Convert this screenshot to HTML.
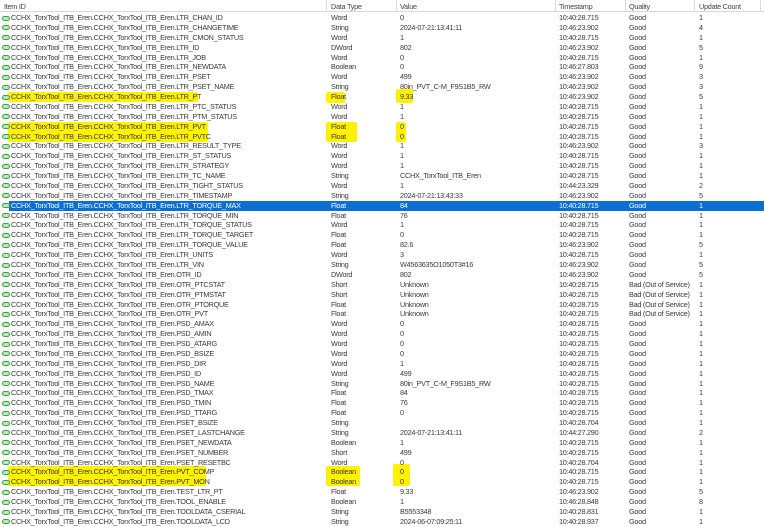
<!DOCTYPE html>
<html><head><meta charset="utf-8"><style>
*{margin:0;padding:0;box-sizing:border-box}
body{width:764px;height:527px;overflow:hidden;background:#fff;font-family:"Liberation Sans",sans-serif;font-size:7.3px;letter-spacing:-0.27px;color:#3a3a3a;position:relative}
.hdr{position:absolute;left:0;top:0;width:764px;height:12px;border-bottom:1px solid #d8d8d8;background:#fff}
.hdr span{position:absolute;top:2px;color:#444}
.hdr i{position:absolute;top:0;width:1px;height:12px;background:#dcdcdc}
.r{position:absolute;left:0;width:764px;height:9.88px;line-height:9.88px;white-space:nowrap}
.r span{position:absolute;top:0}
.r .ic{position:absolute;left:2px;top:2.5px;width:8px;height:5px;border:1.3px solid #3aa53a;border-radius:2.5px;background:#bfe6bf}
.c1{left:11px}.c2{left:331px}.c3{left:400px}.c4{left:559px}.c5{left:629px}.c6{left:699px}
.sel{position:absolute;left:9px;width:755px;height:9.88px;background:#0a6fd1}
.sel2 span{color:#fff}
.hl{position:absolute;background:#fff200;border-radius:2px}
</style></head><body>
<div class="hdr">
<span style="left:4px">Item ID</span><i style="left:326px"></i>
<span style="left:331px">Data Type</span><i style="left:396px"></i>
<span style="left:400px">Value</span><i style="left:555px"></i>
<span style="left:559px">Timestamp</span><i style="left:625px"></i>
<span style="left:629px">Quality</span><i style="left:694px"></i>
<span style="left:699px">Update Count</span><i style="left:760px"></i>
</div>
<div class="hl" style="left:8px;top:92px;width:190px;height:10px"></div>
<div class="hl" style="left:326px;top:92px;width:19px;height:11px"></div>
<div class="hl" style="left:396px;top:89px;width:17px;height:14px"></div>
<div class="hl" style="left:8px;top:122px;width:200px;height:20px"></div>
<div class="hl" style="left:326px;top:122px;width:31px;height:20px"></div>
<div class="hl" style="left:396px;top:122px;width:10px;height:20px"></div>
<div class="hl" style="left:8px;top:466px;width:198px;height:20px"></div>
<div class="hl" style="left:326px;top:466px;width:34px;height:20px"></div>
<div class="hl" style="left:393px;top:464px;width:17px;height:22px"></div>
<div class="sel" style="top:200.7px"></div>
<div class="r" style="top:13px"><b class="ic"></b><span class="c1">CCHX_TorxTool_ITB_Eren.CCHX_TorxTool_ITB_Eren.LTR_CHAN_ID</span><span class="c2">Word</span><span class="c3">0</span><span class="c4">10:40:28.715</span><span class="c5">Good</span><span class="c6">1</span></div>
<div class="r" style="top:22.88px"><b class="ic"></b><span class="c1">CCHX_TorxTool_ITB_Eren.CCHX_TorxTool_ITB_Eren.LTR_CHANGETIME</span><span class="c2">String</span><span class="c3">2024-07-21:13:41:11</span><span class="c4">10:46:23.902</span><span class="c5">Good</span><span class="c6">4</span></div>
<div class="r" style="top:32.76px"><b class="ic"></b><span class="c1">CCHX_TorxTool_ITB_Eren.CCHX_TorxTool_ITB_Eren.LTR_CMON_STATUS</span><span class="c2">Word</span><span class="c3">1</span><span class="c4">10:40:28.715</span><span class="c5">Good</span><span class="c6">1</span></div>
<div class="r" style="top:42.64px"><b class="ic"></b><span class="c1">CCHX_TorxTool_ITB_Eren.CCHX_TorxTool_ITB_Eren.LTR_ID</span><span class="c2">DWord</span><span class="c3">802</span><span class="c4">10:46:23.902</span><span class="c5">Good</span><span class="c6">5</span></div>
<div class="r" style="top:52.52px"><b class="ic"></b><span class="c1">CCHX_TorxTool_ITB_Eren.CCHX_TorxTool_ITB_Eren.LTR_JOB</span><span class="c2">Word</span><span class="c3">0</span><span class="c4">10:40:28.715</span><span class="c5">Good</span><span class="c6">1</span></div>
<div class="r" style="top:62.4px"><b class="ic"></b><span class="c1">CCHX_TorxTool_ITB_Eren.CCHX_TorxTool_ITB_Eren.LTR_NEWDATA</span><span class="c2">Boolean</span><span class="c3">0</span><span class="c4">10:46:27.803</span><span class="c5">Good</span><span class="c6">9</span></div>
<div class="r" style="top:72.28px"><b class="ic"></b><span class="c1">CCHX_TorxTool_ITB_Eren.CCHX_TorxTool_ITB_Eren.LTR_PSET</span><span class="c2">Word</span><span class="c3">499</span><span class="c4">10:46:23.902</span><span class="c5">Good</span><span class="c6">3</span></div>
<div class="r" style="top:82.16px"><b class="ic"></b><span class="c1">CCHX_TorxTool_ITB_Eren.CCHX_TorxTool_ITB_Eren.LTR_PSET_NAME</span><span class="c2">String</span><span class="c3">80in_PVT_C-M_F9S1B5_RW</span><span class="c4">10:46:23.902</span><span class="c5">Good</span><span class="c6">3</span></div>
<div class="r" style="top:92.04px"><b class="ic"></b><span class="c1">CCHX_TorxTool_ITB_Eren.CCHX_TorxTool_ITB_Eren.LTR_PT</span><span class="c2">Float</span><span class="c3">9.33</span><span class="c4">10:46:23.902</span><span class="c5">Good</span><span class="c6">5</span></div>
<div class="r" style="top:101.92px"><b class="ic"></b><span class="c1">CCHX_TorxTool_ITB_Eren.CCHX_TorxTool_ITB_Eren.LTR_PTC_STATUS</span><span class="c2">Word</span><span class="c3">1</span><span class="c4">10:40:28.715</span><span class="c5">Good</span><span class="c6">1</span></div>
<div class="r" style="top:111.8px"><b class="ic"></b><span class="c1">CCHX_TorxTool_ITB_Eren.CCHX_TorxTool_ITB_Eren.LTR_PTM_STATUS</span><span class="c2">Word</span><span class="c3">1</span><span class="c4">10:40:28.715</span><span class="c5">Good</span><span class="c6">1</span></div>
<div class="r" style="top:121.68px"><b class="ic"></b><span class="c1">CCHX_TorxTool_ITB_Eren.CCHX_TorxTool_ITB_Eren.LTR_PVT</span><span class="c2">Float</span><span class="c3">0</span><span class="c4">10:40:28.715</span><span class="c5">Good</span><span class="c6">1</span></div>
<div class="r" style="top:131.56px"><b class="ic"></b><span class="c1">CCHX_TorxTool_ITB_Eren.CCHX_TorxTool_ITB_Eren.LTR_PVTC</span><span class="c2">Float</span><span class="c3">0</span><span class="c4">10:40:28.715</span><span class="c5">Good</span><span class="c6">1</span></div>
<div class="r" style="top:141.44px"><b class="ic"></b><span class="c1">CCHX_TorxTool_ITB_Eren.CCHX_TorxTool_ITB_Eren.LTR_RESULT_TYPE</span><span class="c2">Word</span><span class="c3">1</span><span class="c4">10:46:23.902</span><span class="c5">Good</span><span class="c6">3</span></div>
<div class="r" style="top:151.32px"><b class="ic"></b><span class="c1">CCHX_TorxTool_ITB_Eren.CCHX_TorxTool_ITB_Eren.LTR_ST_STATUS</span><span class="c2">Word</span><span class="c3">1</span><span class="c4">10:40:28.715</span><span class="c5">Good</span><span class="c6">1</span></div>
<div class="r" style="top:161.2px"><b class="ic"></b><span class="c1">CCHX_TorxTool_ITB_Eren.CCHX_TorxTool_ITB_Eren.LTR_STRATEGY</span><span class="c2">Word</span><span class="c3">1</span><span class="c4">10:40:28.715</span><span class="c5">Good</span><span class="c6">1</span></div>
<div class="r" style="top:171.08px"><b class="ic"></b><span class="c1">CCHX_TorxTool_ITB_Eren.CCHX_TorxTool_ITB_Eren.LTR_TC_NAME</span><span class="c2">String</span><span class="c3">CCHX_TorxTool_ITB_Eren</span><span class="c4">10:40:28.715</span><span class="c5">Good</span><span class="c6">1</span></div>
<div class="r" style="top:180.96px"><b class="ic"></b><span class="c1">CCHX_TorxTool_ITB_Eren.CCHX_TorxTool_ITB_Eren.LTR_TIGHT_STATUS</span><span class="c2">Word</span><span class="c3">1</span><span class="c4">10:44:23.329</span><span class="c5">Good</span><span class="c6">2</span></div>
<div class="r" style="top:190.84px"><b class="ic"></b><span class="c1">CCHX_TorxTool_ITB_Eren.CCHX_TorxTool_ITB_Eren.LTR_TIMESTAMP</span><span class="c2">String</span><span class="c3">2024-07-21:13:43:33</span><span class="c4">10:46:23.902</span><span class="c5">Good</span><span class="c6">5</span></div>
<div class="r sel2" style="top:200.72px"><b class="ic"></b><span class="c1">CCHX_TorxTool_ITB_Eren.CCHX_TorxTool_ITB_Eren.LTR_TORQUE_MAX</span><span class="c2">Float</span><span class="c3">84</span><span class="c4">10:40:28.715</span><span class="c5">Good</span><span class="c6">1</span></div>
<div class="r" style="top:210.6px"><b class="ic"></b><span class="c1">CCHX_TorxTool_ITB_Eren.CCHX_TorxTool_ITB_Eren.LTR_TORQUE_MIN</span><span class="c2">Float</span><span class="c3">76</span><span class="c4">10:40:28.715</span><span class="c5">Good</span><span class="c6">1</span></div>
<div class="r" style="top:220.48px"><b class="ic"></b><span class="c1">CCHX_TorxTool_ITB_Eren.CCHX_TorxTool_ITB_Eren.LTR_TORQUE_STATUS</span><span class="c2">Word</span><span class="c3">1</span><span class="c4">10:40:28.715</span><span class="c5">Good</span><span class="c6">1</span></div>
<div class="r" style="top:230.36px"><b class="ic"></b><span class="c1">CCHX_TorxTool_ITB_Eren.CCHX_TorxTool_ITB_Eren.LTR_TORQUE_TARGET</span><span class="c2">Float</span><span class="c3">0</span><span class="c4">10:40:28.715</span><span class="c5">Good</span><span class="c6">1</span></div>
<div class="r" style="top:240.24px"><b class="ic"></b><span class="c1">CCHX_TorxTool_ITB_Eren.CCHX_TorxTool_ITB_Eren.LTR_TORQUE_VALUE</span><span class="c2">Float</span><span class="c3">82.6</span><span class="c4">10:46:23.902</span><span class="c5">Good</span><span class="c6">5</span></div>
<div class="r" style="top:250.12px"><b class="ic"></b><span class="c1">CCHX_TorxTool_ITB_Eren.CCHX_TorxTool_ITB_Eren.LTR_UNITS</span><span class="c2">Word</span><span class="c3">3</span><span class="c4">10:40:28.715</span><span class="c5">Good</span><span class="c6">1</span></div>
<div class="r" style="top:260px"><b class="ic"></b><span class="c1">CCHX_TorxTool_ITB_Eren.CCHX_TorxTool_ITB_Eren.LTR_VIN</span><span class="c2">String</span><span class="c3">W4563635O1050T3#16</span><span class="c4">10:46:23.902</span><span class="c5">Good</span><span class="c6">5</span></div>
<div class="r" style="top:269.88px"><b class="ic"></b><span class="c1">CCHX_TorxTool_ITB_Eren.CCHX_TorxTool_ITB_Eren.OTR_ID</span><span class="c2">DWord</span><span class="c3">802</span><span class="c4">10:46:23.902</span><span class="c5">Good</span><span class="c6">5</span></div>
<div class="r" style="top:279.76px"><b class="ic"></b><span class="c1">CCHX_TorxTool_ITB_Eren.CCHX_TorxTool_ITB_Eren.OTR_PTCSTAT</span><span class="c2">Short</span><span class="c3">Unknown</span><span class="c4">10:40:28.715</span><span class="c5">Bad (Out of Service)</span><span class="c6">1</span></div>
<div class="r" style="top:289.64px"><b class="ic"></b><span class="c1">CCHX_TorxTool_ITB_Eren.CCHX_TorxTool_ITB_Eren.OTR_PTMSTAT</span><span class="c2">Short</span><span class="c3">Unknown</span><span class="c4">10:40:28.715</span><span class="c5">Bad (Out of Service)</span><span class="c6">1</span></div>
<div class="r" style="top:299.52px"><b class="ic"></b><span class="c1">CCHX_TorxTool_ITB_Eren.CCHX_TorxTool_ITB_Eren.OTR_PTORQUE</span><span class="c2">Float</span><span class="c3">Unknown</span><span class="c4">10:40:28.715</span><span class="c5">Bad (Out of Service)</span><span class="c6">1</span></div>
<div class="r" style="top:309.4px"><b class="ic"></b><span class="c1">CCHX_TorxTool_ITB_Eren.CCHX_TorxTool_ITB_Eren.OTR_PVT</span><span class="c2">Float</span><span class="c3">Unknown</span><span class="c4">10:40:28.715</span><span class="c5">Bad (Out of Service)</span><span class="c6">1</span></div>
<div class="r" style="top:319.28px"><b class="ic"></b><span class="c1">CCHX_TorxTool_ITB_Eren.CCHX_TorxTool_ITB_Eren.PSD_AMAX</span><span class="c2">Word</span><span class="c3">0</span><span class="c4">10:40:28.715</span><span class="c5">Good</span><span class="c6">1</span></div>
<div class="r" style="top:329.16px"><b class="ic"></b><span class="c1">CCHX_TorxTool_ITB_Eren.CCHX_TorxTool_ITB_Eren.PSD_AMIN</span><span class="c2">Word</span><span class="c3">0</span><span class="c4">10:40:28.715</span><span class="c5">Good</span><span class="c6">1</span></div>
<div class="r" style="top:339.04px"><b class="ic"></b><span class="c1">CCHX_TorxTool_ITB_Eren.CCHX_TorxTool_ITB_Eren.PSD_ATARG</span><span class="c2">Word</span><span class="c3">0</span><span class="c4">10:40:28.715</span><span class="c5">Good</span><span class="c6">1</span></div>
<div class="r" style="top:348.92px"><b class="ic"></b><span class="c1">CCHX_TorxTool_ITB_Eren.CCHX_TorxTool_ITB_Eren.PSD_BSIZE</span><span class="c2">Word</span><span class="c3">0</span><span class="c4">10:40:28.715</span><span class="c5">Good</span><span class="c6">1</span></div>
<div class="r" style="top:358.8px"><b class="ic"></b><span class="c1">CCHX_TorxTool_ITB_Eren.CCHX_TorxTool_ITB_Eren.PSD_DIR</span><span class="c2">Word</span><span class="c3">1</span><span class="c4">10:40:28.715</span><span class="c5">Good</span><span class="c6">1</span></div>
<div class="r" style="top:368.68px"><b class="ic"></b><span class="c1">CCHX_TorxTool_ITB_Eren.CCHX_TorxTool_ITB_Eren.PSD_ID</span><span class="c2">Word</span><span class="c3">499</span><span class="c4">10:40:28.715</span><span class="c5">Good</span><span class="c6">1</span></div>
<div class="r" style="top:378.56px"><b class="ic"></b><span class="c1">CCHX_TorxTool_ITB_Eren.CCHX_TorxTool_ITB_Eren.PSD_NAME</span><span class="c2">String</span><span class="c3">80in_PVT_C-M_F9S1B5_RW</span><span class="c4">10:40:28.715</span><span class="c5">Good</span><span class="c6">1</span></div>
<div class="r" style="top:388.44px"><b class="ic"></b><span class="c1">CCHX_TorxTool_ITB_Eren.CCHX_TorxTool_ITB_Eren.PSD_TMAX</span><span class="c2">Float</span><span class="c3">84</span><span class="c4">10:40:28.715</span><span class="c5">Good</span><span class="c6">1</span></div>
<div class="r" style="top:398.32px"><b class="ic"></b><span class="c1">CCHX_TorxTool_ITB_Eren.CCHX_TorxTool_ITB_Eren.PSD_TMIN</span><span class="c2">Float</span><span class="c3">76</span><span class="c4">10:40:28.715</span><span class="c5">Good</span><span class="c6">1</span></div>
<div class="r" style="top:408.2px"><b class="ic"></b><span class="c1">CCHX_TorxTool_ITB_Eren.CCHX_TorxTool_ITB_Eren.PSD_TTARG</span><span class="c2">Float</span><span class="c3">0</span><span class="c4">10:40:28.715</span><span class="c5">Good</span><span class="c6">1</span></div>
<div class="r" style="top:418.08px"><b class="ic"></b><span class="c1">CCHX_TorxTool_ITB_Eren.CCHX_TorxTool_ITB_Eren.PSET_BSIZE</span><span class="c2">String</span><span class="c3"></span><span class="c4">10:40:28.704</span><span class="c5">Good</span><span class="c6">1</span></div>
<div class="r" style="top:427.96px"><b class="ic"></b><span class="c1">CCHX_TorxTool_ITB_Eren.CCHX_TorxTool_ITB_Eren.PSET_LASTCHANGE</span><span class="c2">String</span><span class="c3">2024-07-21:13:41:11</span><span class="c4">10:44:27.290</span><span class="c5">Good</span><span class="c6">2</span></div>
<div class="r" style="top:437.84px"><b class="ic"></b><span class="c1">CCHX_TorxTool_ITB_Eren.CCHX_TorxTool_ITB_Eren.PSET_NEWDATA</span><span class="c2">Boolean</span><span class="c3">1</span><span class="c4">10:40:28.715</span><span class="c5">Good</span><span class="c6">1</span></div>
<div class="r" style="top:447.72px"><b class="ic"></b><span class="c1">CCHX_TorxTool_ITB_Eren.CCHX_TorxTool_ITB_Eren.PSET_NUMBER</span><span class="c2">Short</span><span class="c3">499</span><span class="c4">10:40:28.715</span><span class="c5">Good</span><span class="c6">1</span></div>
<div class="r" style="top:457.6px"><b class="ic"></b><span class="c1">CCHX_TorxTool_ITB_Eren.CCHX_TorxTool_ITB_Eren.PSET_RESETBC</span><span class="c2">Word</span><span class="c3">0</span><span class="c4">10:40:28.704</span><span class="c5">Good</span><span class="c6">1</span></div>
<div class="r" style="top:467.48px"><b class="ic"></b><span class="c1">CCHX_TorxTool_ITB_Eren.CCHX_TorxTool_ITB_Eren.PVT_COMP</span><span class="c2">Boolean</span><span class="c3">0</span><span class="c4">10:40:28.715</span><span class="c5">Good</span><span class="c6">1</span></div>
<div class="r" style="top:477.36px"><b class="ic"></b><span class="c1">CCHX_TorxTool_ITB_Eren.CCHX_TorxTool_ITB_Eren.PVT_MON</span><span class="c2">Boolean</span><span class="c3">0</span><span class="c4">10:40:28.715</span><span class="c5">Good</span><span class="c6">1</span></div>
<div class="r" style="top:487.24px"><b class="ic"></b><span class="c1">CCHX_TorxTool_ITB_Eren.CCHX_TorxTool_ITB_Eren.TEST_LTR_PT</span><span class="c2">Float</span><span class="c3">9.33</span><span class="c4">10:46:23.902</span><span class="c5">Good</span><span class="c6">5</span></div>
<div class="r" style="top:497.12px"><b class="ic"></b><span class="c1">CCHX_TorxTool_ITB_Eren.CCHX_TorxTool_ITB_Eren.TOOL_ENABLE</span><span class="c2">Boolean</span><span class="c3">1</span><span class="c4">10:46:28.848</span><span class="c5">Good</span><span class="c6">8</span></div>
<div class="r" style="top:507px"><b class="ic"></b><span class="c1">CCHX_TorxTool_ITB_Eren.CCHX_TorxTool_ITB_Eren.TOOLDATA_CSERIAL</span><span class="c2">String</span><span class="c3">B5553348</span><span class="c4">10:40:28.831</span><span class="c5">Good</span><span class="c6">1</span></div>
<div class="r" style="top:516.88px"><b class="ic"></b><span class="c1">CCHX_TorxTool_ITB_Eren.CCHX_TorxTool_ITB_Eren.TOOLDATA_LCD</span><span class="c2">String</span><span class="c3">2024-06-07:09:25:11</span><span class="c4">10:40:28.937</span><span class="c5">Good</span><span class="c6">1</span></div>
</body></html>
